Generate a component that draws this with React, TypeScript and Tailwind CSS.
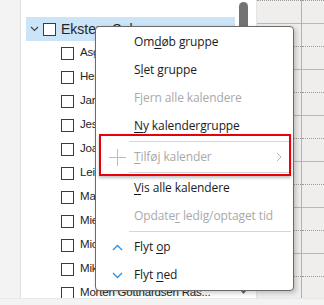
import React from 'react';

const font = { fontFamily: '"Open Sans", "Noto Sans", sans-serif' };
const treeFont = { fontFamily: '"Liberation Sans", Arial, sans-serif' };

const children = [
  'Asger Holm',
  'Henrik Lund',
  'Jan Madsen',
  'Jesper Berg',
  'Joachim Friis',
  'Leif Nørgaard',
  'Mads Kjær',
  'Mie Sørensen',
  'Michael Dahl',
  'Mikkel Bach',
  'Morten Gotthardsen Ras...',
];

function Box() {
  return <span className="w-[13px] h-[13px] border border-[#3b3b3b] bg-white shrink-0" />;
}

function U({ children }: { children: React.ReactNode }) {
  return <span className="underline underline-offset-2 decoration-1">{children}</span>;
}

function Item({
  icon,
  children,
  disabled,
  sub,
}: {
  icon?: React.ReactNode;
  children: React.ReactNode;
  disabled?: boolean;
  sub?: boolean;
}) {
  return (
    <div className={`h-[28px] flex items-center ${disabled ? 'text-[#a9a9a9]' : 'text-[#1b1b1b]'}`}>
      <div className="w-[38px] flex justify-center items-center pl-[4px]">{icon}</div>
      <div className="flex-1 text-[12px] leading-none tracking-[-0.1px]">{children}</div>
      {sub && (
        <svg width="6" height="10" viewBox="0 0 6 10" className="mr-[11px]">
          <path d="M1 1 L5 5 L1 9" fill="none" stroke="#b8b8b8" strokeWidth="1" />
        </svg>
      )}
    </div>
  );
}

function Sep() {
  return (
    <div className="py-[1px] pl-[33px] pr-[2px]">
      <div className="h-[1px] bg-[#d6d6d6]" />
    </div>
  );
}

function GridCol({ first }: { first?: boolean }) {
  return (
    <div className={`flex flex-col ${first ? 'w-[45px] border-r border-[#b3b1af]' : 'flex-1'}`}>
      {Array.from({ length: 14 }).map((_, i) => (
        <div
          key={i}
          className={`h-[23px] shrink-0 border-t ${
            i % 2 === 0 ? 'border-dotted border-[#9e9c9a]' : 'border-solid border-[#bab8b6]'
          }`}
        />
      ))}
    </div>
  );
}

export default function App() {
  return (
    <div className="relative w-[324px] h-[305px] overflow-hidden bg-white flex flex-col" style={font}>
      <div className="flex flex-1 min-h-0">
        {/* left rail */}
        <div className="w-[21px] bg-[#f3f3f3] border-r border-[#e1e1e1]" />

        {/* folder tree */}
        <div className="w-[236px] shrink-0 flex bg-white border-r border-[#e4e4e4]" style={treeFont}>
          <div className="flex-1 min-w-0 pt-[17px] pl-[5px]">
            <div className="h-[24px] w-[209px] bg-[#cce4f7] flex items-center">
              <svg width="9" height="6" viewBox="0 0 9 6" className="ml-[4px] mr-[4px]">
                <path d="M1 1 L4.5 4.5 L8 1" fill="none" stroke="#444" strokeWidth="1.2" />
              </svg>
              <Box />
              <span className="ml-[5px] text-[14px] text-[#262626] whitespace-nowrap">Ekstern Salg</span>
            </div>
            {children.map((n) => (
              <div key={n} className="h-[24px] flex items-center pl-[35px]">
                <Box />
                <span className="ml-[6px] text-[11.5px] tracking-[-0.2px] text-[#262626] whitespace-nowrap">{n}</span>
              </div>
            ))}
          </div>
          <div className="w-[17px] shrink-0 relative">
            <div className="absolute left-0 top-[2px] w-[9px] h-[230px] rounded-t-full bg-[#737373]" />
            <svg width="7" height="5" viewBox="0 0 7 5" className="absolute left-[1px] top-[290px]">
              <path d="M0 0 L7 0 L3.5 4 Z" fill="#6b6b6b" />
            </svg>
          </div>
        </div>

        {/* calendar grid */}
        <div className="flex-1 min-w-0 flex bg-[#efeeed] overflow-hidden">
          <GridCol first />
          <GridCol />
        </div>
      </div>
      <div className="h-[7px] bg-[#f3f3f3] border-t border-[#e8e8e8]" />

      {/* context menu */}
      <div className="absolute left-[95px] top-[26px] w-[199px] bg-white border border-[#6a6a6a] rounded-[4px] shadow-[2px_2px_5px_rgba(0,0,0,0.22)] pt-[1px] pb-[1px]">
        <Item>
          Om<U>d</U>øb gruppe
        </Item>
        <Item>
          S<U>l</U>et gruppe
        </Item>
        <Item disabled>
          F<U>j</U>ern alle kalendere
        </Item>
        <Item>
          <U>N</U>y kalendergruppe
        </Item>
        <Sep />
        <Item
          disabled
          sub
          icon={
            <svg width="17" height="17" viewBox="0 0 17 17">
              <path d="M8.5 0 V17 M0 8.5 H17" stroke="#bdbdbd" strokeWidth="1" />
            </svg>
          }
        >
          <U>T</U>ilføj kalender
        </Item>
        <Sep />
        <Item>
          <U>V</U>is alle kalendere
        </Item>
        <Item disabled>
          Opdate<U>r</U> ledig/optaget tid
        </Item>
        <Sep />
        <Item
          icon={
            <svg width="11" height="7" viewBox="0 0 11 7">
              <path d="M1 6 L5.5 1.5 L10 6" fill="none" stroke="#2e8ee0" strokeWidth="1.3" />
            </svg>
          }
        >
          Flyt <U>o</U>p
        </Item>
        <Item
          icon={
            <svg width="11" height="7" viewBox="0 0 11 7">
              <path d="M1 1 L5.5 5.5 L10 1" fill="none" stroke="#2e8ee0" strokeWidth="1.3" />
            </svg>
          }
        >
          Flyt <U>n</U>ed
        </Item>
      </div>

      {/* highlight annotation */}
      <div className="absolute left-[99px] top-[134px] w-[192px] h-[42px] border-2 border-[#e8000b] shadow-[0_2px_3px_rgba(0,0,0,0.25)]" />
    </div>
  );
}
